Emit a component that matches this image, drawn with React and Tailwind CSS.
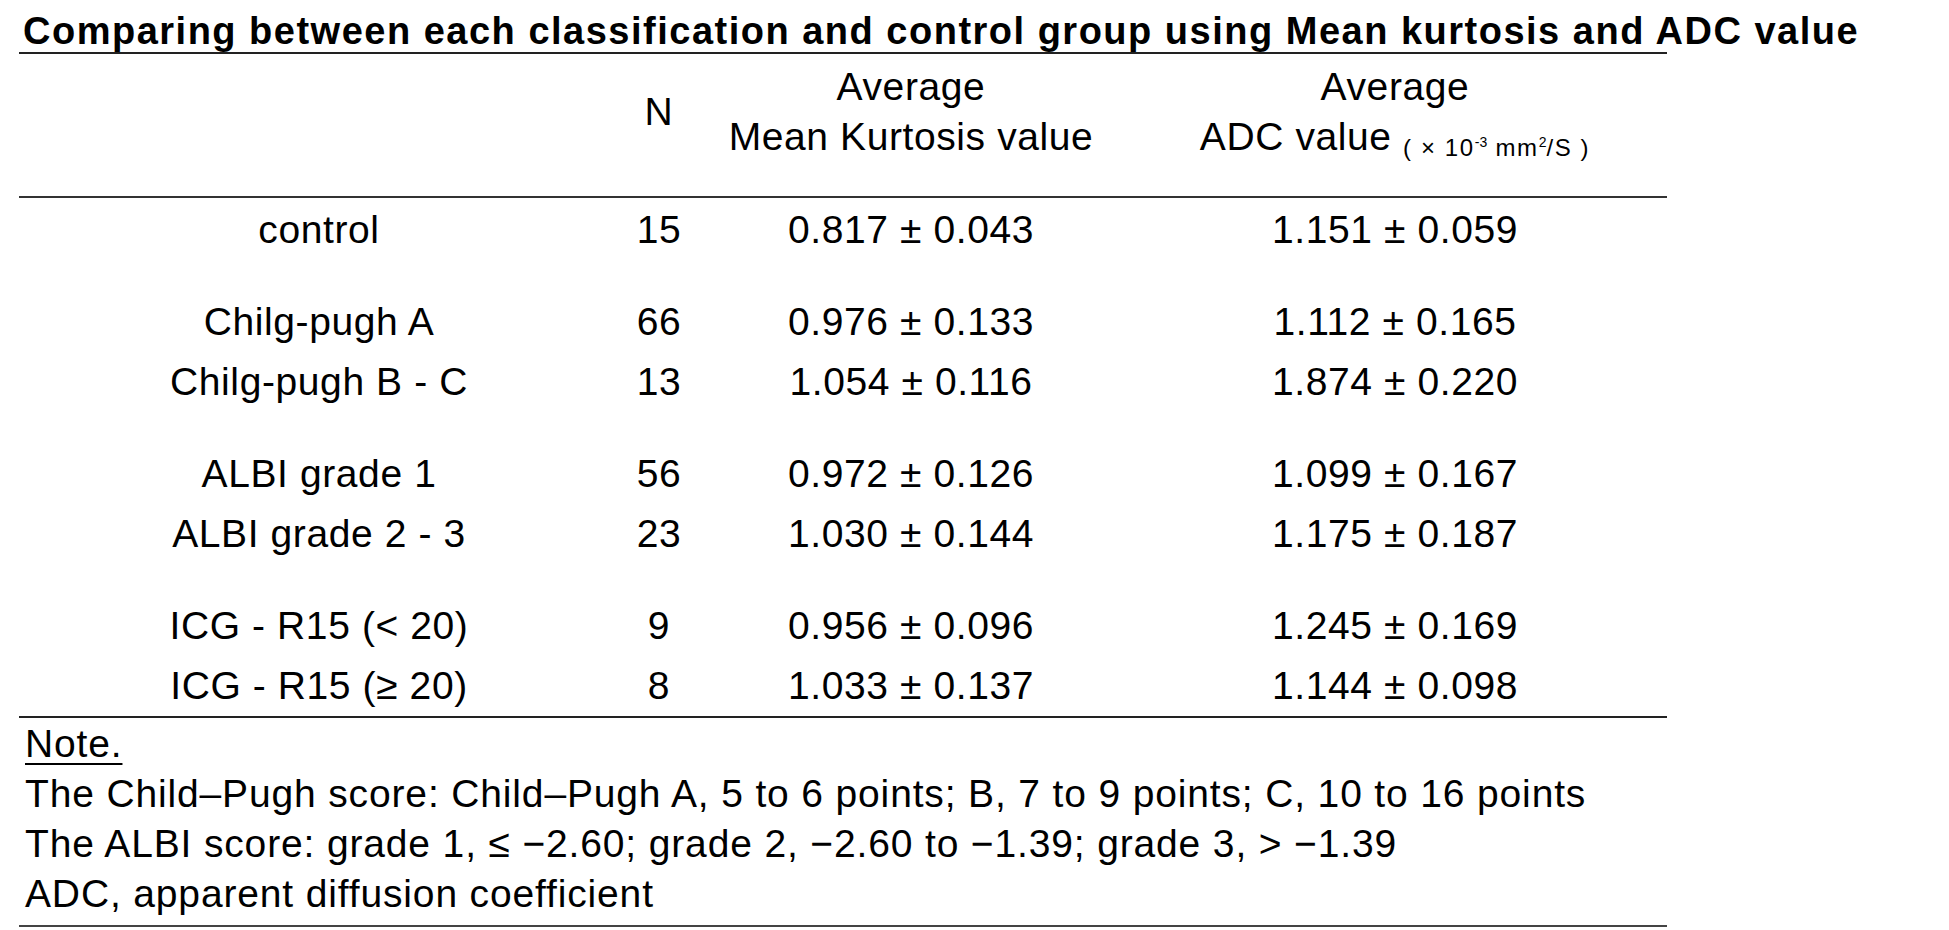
const groups = [
  [['control', '15', '0.817 ± 0.043', '1.151 ± 0.059']],
  [
    ['Chilg-pugh A', '66', '0.976 ± 0.133', '1.112 ± 0.165'],
    ['Chilg-pugh B - C', '13', '1.054 ± 0.116', '1.874 ± 0.220'],
  ],
  [
    ['ALBI grade 1', '56', '0.972 ± 0.126', '1.099 ± 0.167'],
    ['ALBI grade 2 - 3', '23', '1.030 ± 0.144', '1.175 ± 0.187'],
  ],
  [
    ['ICG - R15 (< 20)', '9', '0.956 ± 0.096', '1.245 ± 0.169'],
    ['ICG - R15 (≥ 20)', '8', '1.033 ± 0.137', '1.144 ± 0.098'],
  ],
];

const notes = [
  'The Child–Pugh score: Child–Pugh A, 5 to 6 points; B, 7 to 9 points; C, 10 to 16 points',
  'The ALBI score: grade 1, ≤ −2.60; grade 2, −2.60 to −1.39; grade 3, > −1.39',
  'ADC, apparent diffusion coefficient',
];

const cols = 'grid grid-cols-[600px_80px_424px_544px] text-center';

const Row = ({ cells }) => (
  <div className={`${cols} h-[60px] leading-[60px]`}>
    {cells.map((c, i) => (
      <div key={i} className="whitespace-nowrap">
        {c}
      </div>
    ))}
  </div>
);

const App = () => {
  return (
    <div className="w-[1949px] h-[930px] overflow-hidden bg-white text-black font-['Liberation_Sans',Arial,sans-serif]">
      <div className="ml-[19px] w-[1648px]">
        <h1 className="h-[52px] pt-[12px] pl-[4px] text-[38px] leading-[38px] font-bold tracking-[1.5px] whitespace-nowrap">
          Comparing between each classification and control group using Mean kurtosis and ADC value
        </h1>

        <div className="border-t-2 border-[#222] text-[39px] tracking-[0.6px]">
          {/* header */}
          <div className={`${cols} h-[144px] pt-[8px] leading-[50px] border-b-2 border-[#333]`}>
            <div />
            <div className="mt-[25px]">N</div>
            <div>
              <div>Average</div>
              <div className="whitespace-nowrap">Mean Kurtosis value</div>
            </div>
            <div>
              <div>Average</div>
              <div className="whitespace-nowrap">
                ADC value{' '}
                <span className="text-[24px] leading-none tracking-[1.6px] align-[-6px]">
                  ( × 10
                  <sup className="text-[14px] tracking-normal -top-[9px]">-3</sup> mm
                  <sup className="text-[14px] tracking-normal -top-[9px]">2</sup>/S )
                </span>
              </div>
            </div>
          </div>

          {/* body */}
          <div className="flex flex-col gap-[32px] pt-[2px] border-b-2 border-[#222]">
            {groups.map((g, gi) => (
              <div key={gi} className="flex flex-col">
                {g.map((r, ri) => (
                  <Row key={ri} cells={r} />
                ))}
              </div>
            ))}
          </div>

          {/* notes */}
          <div className="pl-[6px] pt-[1px] pb-[6px] leading-[50px] tracking-[0.85px] border-b-2 border-[#444] whitespace-nowrap">
            <div>
              <span className="underline decoration-2 underline-offset-[6px]">Note.</span>
            </div>
            {notes.map((n, i) => (
              <div key={i}>{n}</div>
            ))}
          </div>
        </div>
      </div>
    </div>
  );
};

export default App;
